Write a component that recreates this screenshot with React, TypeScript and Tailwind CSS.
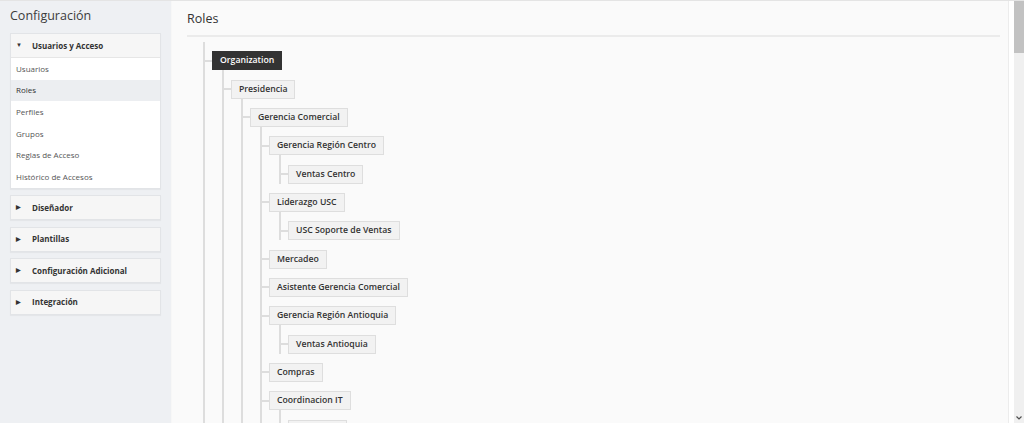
import React from "react";

interface RoleNode {
  name: string;
  children?: RoleNode[];
}

const roles: RoleNode = {
  name: "Organization",
  children: [
    {
      name: "Presidencia",
      children: [
        {
          name: "Gerencia Comercial",
          children: [
            { name: "Gerencia Región Centro", children: [{ name: "Ventas Centro" }] },
            { name: "Liderazgo USC", children: [{ name: "USC Soporte de Ventas" }] },
            { name: "Mercadeo" },
            { name: "Asistente Gerencia Comercial" },
            { name: "Gerencia Región Antioquia", children: [{ name: "Ventas Antioquia" }] },
            { name: "Compras" },
            { name: "Coordinacion IT", children: [{ name: "Soporte IT" }, { name: "Desarrollo" }] },
            { name: "Logística" },
          ],
        },
        { name: "Gerencia Financiera", children: [{ name: "Contabilidad" }] },
      ],
    },
    { name: "Junta Directiva" },
  ],
};

const sections = ["Diseñador", "Plantillas", "Configuración Adicional", "Integración"];
const userItems = ["Usuarios", "Roles", "Perfiles", "Grupos", "Reglas de Acceso", "Histórico de Accesos"];

function NodeBox({ name, dark }: { name: string; dark?: boolean }) {
  return (
    <div
      className={
        dark
          ? "h-[19px] px-[7px] flex items-center bg-[#333333] text-white border border-[#333333] text-[8.7px] font-semibold whitespace-nowrap"
          : "h-[19px] px-[7px] flex items-center bg-[#f2f2f2] text-[#333333] border border-[#dedede] text-[8.7px] font-semibold whitespace-nowrap"
      }
    >
      {name}
    </div>
  );
}

function TreeItem({ node, dark }: { node: RoleNode; dark?: boolean }) {
  return (
    <div className="pt-[9.33px]">
      <div className="flex items-center">
        <div className="w-[7px] h-[2px] bg-[#dddddd]" />
        <NodeBox name={node.name} dark={dark} />
      </div>
      {node.children && (
        <div className="ml-[17px] border-l-2 border-[#dddddd]">
          {node.children.map((c) => (
            <TreeItem key={c.name} node={c} />
          ))}
        </div>
      )}
    </div>
  );
}

export default function App() {
  return (
    <div
      className="h-[423px] w-[1024px] overflow-hidden flex border-t border-[#e4e4e4] bg-white"
      style={{ fontFamily: '"Open Sans", "Liberation Sans", sans-serif' }}
    >
      {/* sidebar */}
      <aside className="w-[172px] shrink-0 bg-[#eef0f3] border-r border-[#f7f7f7] px-[10px]">
        <h1 className="text-[12.5px] text-[#3c3c3c] mt-[6px] mb-[8px] leading-[18px]">Configuración</h1>
        <div className="bg-white border border-[#e2e4e7] shadow-[0_1px_1px_rgba(0,0,0,0.04)]">
          <div className="h-[24px] flex items-center bg-[#f6f6f6] border-b border-[#e6e6e6] px-[5px] text-[8px] font-bold text-[#333333]">
            <span className="text-[6px] w-[16px] text-[#333]">▼</span>
            Usuarios y Acceso
          </div>
          {userItems.map((it) => (
            <div
              key={it}
              className={
                it === "Roles"
                  ? "h-[21.67px] flex items-center px-[5px] text-[8px] bg-[#eceef1] text-[#333333]"
                  : "h-[21.67px] flex items-center px-[5px] text-[8px] text-[#555555]"
              }
            >
              {it}
            </div>
          ))}
        </div>
        {sections.map((s) => (
          <div
            key={s}
            className="mt-[6.5px] h-[25px] flex items-center bg-[#f6f6f6] border border-[#e2e4e7] px-[5px] text-[8px] font-bold text-[#333333] shadow-[0_1px_1px_rgba(0,0,0,0.04)]"
          >
            <span className="text-[6px] w-[16px] text-[#333]">▶</span>
            {s}
          </div>
        ))}
      </aside>

      {/* main */}
      <main className="flex-1 bg-[#fafafa] border-r border-[#ececec] pl-[15px] pr-[8px]">
        <h2 className="text-[12.5px] text-[#333333] mt-[9px] leading-[18px] pb-[7px] border-b-2 border-[#ebebeb]">
          Roles
        </h2>
        <div className="ml-[16px] mt-[5px] border-l-2 border-[#dddddd]">
          <TreeItem node={roles} dark />
        </div>
      </main>
      <div className="w-[5px] bg-white" />

      {/* scrollbar */}
      <div className="w-[10px] bg-[#f0f0f0] flex flex-col">
        <div className="h-[52px] bg-[#c2c2c2]" />
        <div className="flex-1" />
        <div className="h-[10px] flex items-center justify-center">
          <svg width="6" height="4" viewBox="0 0 6 4">
            <path d="M0.5 0.5 L3 3 L5.5 0.5" stroke="#505050" strokeWidth="1.2" fill="none" />
          </svg>
        </div>
      </div>
    </div>
  );
}
